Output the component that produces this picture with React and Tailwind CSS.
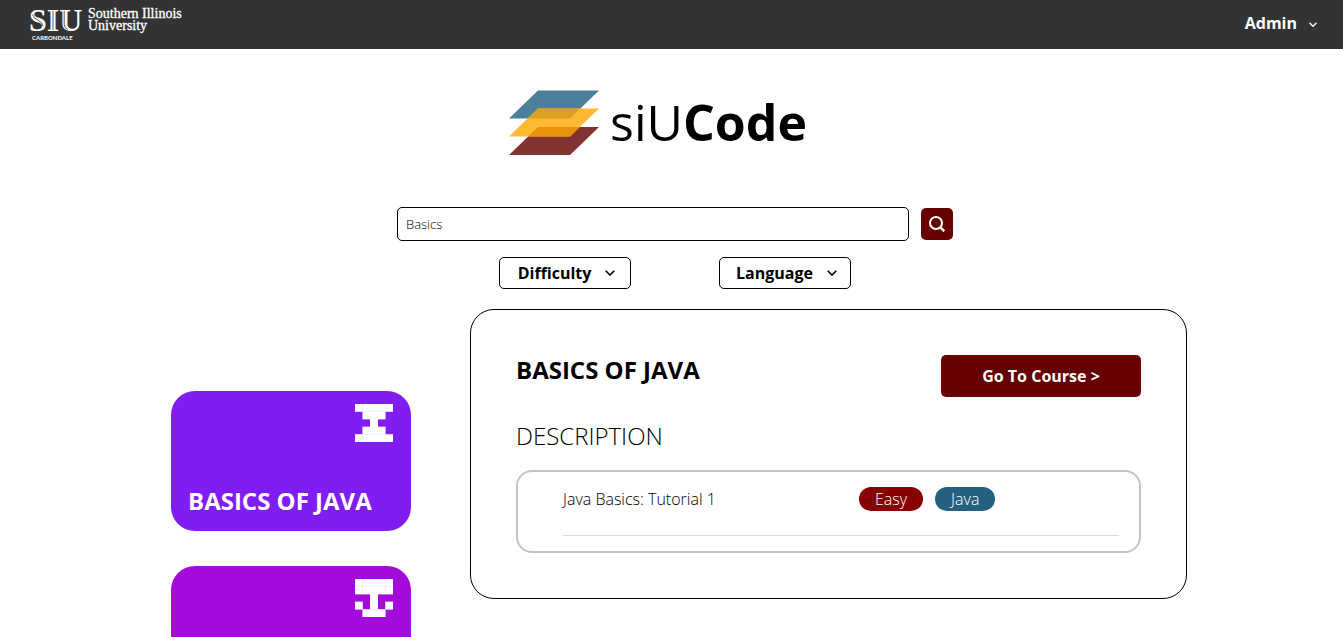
import React from "react";

function UniversityLogo() {
  return (
    <svg className="block" width="160" height="45" viewBox="0 0 160 45" role="img" aria-label="Southern Illinois University Carbondale" fill="#fff">
      <text x="0" y="29" fontFamily="'Liberation Serif', serif" fontSize="32" fontWeight="700">SIU</text>
      <path d="M24 9V28M35.2 9V22.5Q35.6 26.5 39 27.6M3.6 12.5Q4.4 16.2 9 18.2T14 24.2" stroke="#333" strokeWidth="0.8" fill="none" />
      <text x="3" y="38" fontFamily="Lato, sans-serif" fontSize="6" fontWeight="700">CARBONDALE</text>
      <text x="59" y="16" fontFamily="'Liberation Serif', serif" fontSize="14" stroke="#fff" strokeWidth="0.3">Southern Illinois</text>
      <text x="59" y="28" fontFamily="'Liberation Serif', serif" fontSize="14" stroke="#fff" strokeWidth="0.3">University</text>
    </svg>
  );
}

function Chevron() {
  return (
    <svg width="10" height="6" viewBox="0 0 10 6" fill="none" stroke="currentColor" strokeWidth="1.6" aria-hidden="true">
      <path d="M0.7 0.7 5 5 9.3 0.7" />
    </svg>
  );
}

function StackMark() {
  return (
    <svg width="92" height="66" viewBox="0 0 92 66" aria-hidden="true">
      <path d="M30 0.5H91L62 28.5H1Z" fill="#4d7f9c" />
      <path d="M30 37H91L62 65H1Z" fill="#833232" />
      <path d="M30 18.5H91L62 46.5H1Z" fill="#ffb932" />
      <path d="M30 18.5H72.4L62 28.5H19.6Z" fill="#dca124" />
      <path d="M30 37H71.8L62 46.5H20.2Z" fill="#e8930c" />
    </svg>
  );
}

function PixelIcon({ rows }) {
  return (
    <svg className="self-end" width="38" height="38" viewBox="0 0 50 50" fill="#fff" aria-hidden="true">
      {rows.flatMap((row, y) =>
        [...row].map((cell, x) =>
          cell === "#" ? <rect key={`${x}-${y}`} x={x * 10 - 0.25} y={y * 10 - 0.25} width="10.5" height="10.5" /> : null
        )
      )}
    </svg>
  );
}

function FilterButton({ children }) {
  return (
    <button type="button" className="flex h-8 w-[132px] items-center justify-center gap-[14px] rounded-[5px] border border-black bg-white pl-[3px] text-base font-bold">
      {children}
      <Chevron />
    </button>
  );
}

const HOURGLASS = ["#####", ".###.", "..#..", ".###.", "#####"];
const ANCHOR = ["#####", "#####", "..#..", "#.#.#", ".###."];

export default function App() {
  return (
    <div className="h-screen overflow-hidden bg-white font-['Open_Sans',sans-serif] text-black">
      <header className="flex h-[49px] items-center justify-between bg-[#333333] pr-[26px] pl-[29px] text-white">
        <a href="#home">
          <UniversityLogo />
        </a>
        <button type="button" className="flex items-center gap-3 pb-1 text-base font-bold">
          Admin
          <svg className="mt-1" width="8" height="6" viewBox="0 0 8 6" fill="none" stroke="currentColor" strokeWidth="1.3" aria-hidden="true">
            <path d="M0.5 0.8 4 4.3 7.5 0.8" />
          </svg>
        </button>
      </header>

      <h1 className="mt-[41px] flex h-[66px] items-center justify-center gap-[10px] pr-7">
        <StackMark />
        <span className="pb-0.5 text-[50px] leading-[64px]">
          siU<b className="font-bold">Code</b>
        </span>
      </h1>

      <form className="mt-[51px] pl-[7px]" onSubmit={(e) => e.preventDefault()}>
        <div className="mx-auto flex max-w-[556px] items-center gap-3">
          <input
            type="text"
            aria-label="Search courses"
            defaultValue="Basics"
            className="h-[34px] min-w-0 flex-1 rounded-[5px] border border-black px-2 text-[13px] font-light"
          />
          <button type="submit" aria-label="Search" className="flex size-8 items-center justify-center rounded-[5px] bg-[#660000] text-white">
            <svg width="16" height="16" viewBox="0 0 16 16" fill="none" stroke="currentColor" strokeWidth="2" aria-hidden="true">
              <circle cx="7" cy="7" r="6" />
              <path d="M11.2 11.2 15.2 15.2" strokeWidth="2.6" />
            </svg>
          </button>
        </div>
        <div className="mt-4 flex justify-center gap-[88px]">
          <FilterButton>Difficulty</FilterButton>
          <FilterButton>Language</FilterButton>
        </div>
      </form>

      <main className="mt-5 pl-[15px]">
        <div className="mx-auto flex max-w-[1016px] items-start gap-[59px]">
          <nav aria-label="Courses" className="flex w-60 shrink-0 flex-col gap-[35px] pt-[82px]">
            <a href="#java" className="flex h-[140px] flex-col justify-between rounded-3xl bg-[#801df3] pt-[13px] pr-[18px] pb-[14px] pl-[17px] text-2xl font-bold text-white">
              <PixelIcon rows={HOURGLASS} />
              BASICS OF JAVA
            </a>
            <a href="#next" aria-label="Next course" className="flex h-[140px] flex-col rounded-3xl bg-[#a30bdd] pt-[13px] pr-[18px] pb-[14px] pl-[17px]">
              <PixelIcon rows={ANCHOR} />
            </a>
          </nav>

          <section className="min-w-0 flex-1 rounded-3xl border border-black p-[45px]">
            <div className="flex items-start justify-between">
              <h2 className="text-2xl leading-[30px] font-bold">BASICS OF JAVA</h2>
              <button type="button" className="h-[42px] w-[200px] rounded-[5px] bg-[#660000] text-base font-bold text-white">
                Go To Course &gt;
              </button>
            </div>
            <h3 className="mt-6 text-2xl leading-[30px] font-light">DESCRIPTION</h3>
            <div className="mt-[19px] rounded-2xl border-2 border-[#c5c5bf] pt-[15px] pr-5 pb-[15px] pl-[45px]">
              <div className="flex border-b border-[#dcdcdc] pb-6 text-base font-light">
                <span className="w-[296px]">Java Basics: Tutorial 1</span>
                <span className="flex gap-3 text-white">
                  <span className="rounded-full bg-[#880000] px-4">Easy</span>
                  <span className="rounded-full bg-[#266080] px-4">Java</span>
                </span>
              </div>
            </div>
          </section>
        </div>
      </main>
    </div>
  );
}
